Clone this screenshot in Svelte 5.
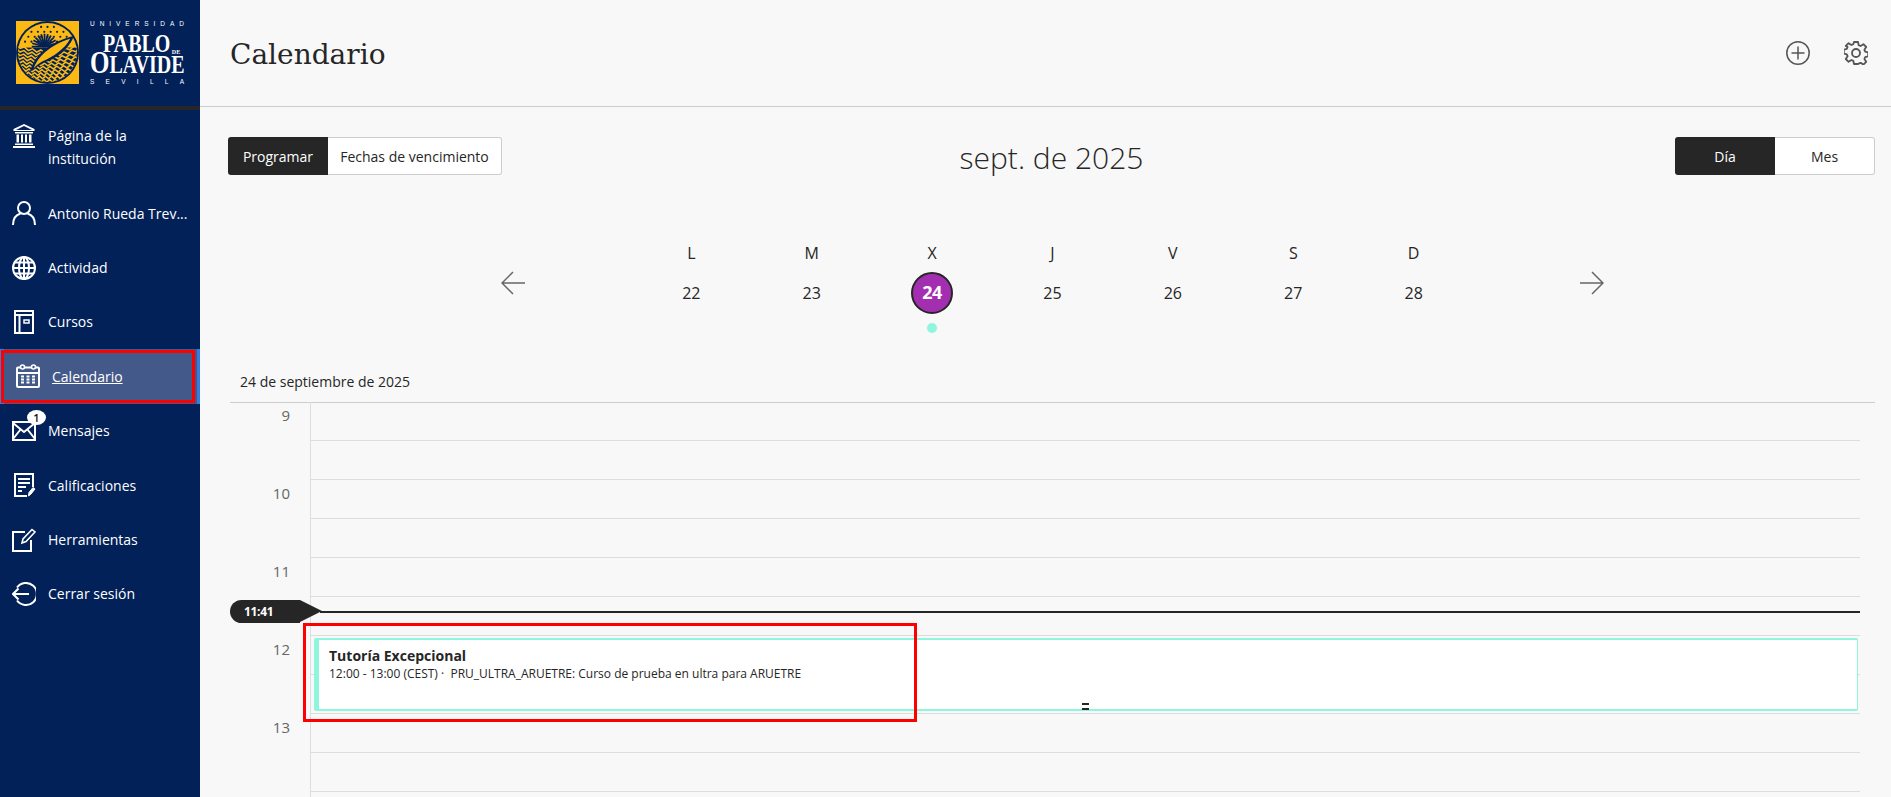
<script lang="ts">
const days = [
  { letter: 'L', num: 22 },
  { letter: 'M', num: 23 },
  { letter: 'X', num: 24, today: true },
  { letter: 'J', num: 25 },
  { letter: 'V', num: 26 },
  { letter: 'S', num: 27 },
  { letter: 'D', num: 28 }
];
// the last row only shows its grid lines, its label is below the fold
const hours = ['9', '10', '11', '12', '13', ''];

// zigzag stripes of the logo's lower half
function zigzags() {
  const out: string[] = [];
  for (let r = 0; r < 10; r++) {
    const y = 31 + r * 3.3;
    let d = `M0 ${y}`;
    const step = 4.2 - r * 0.15;
    for (let x = 0, i = 0; x < 66; x += step, i++) {
      const bend = ((x - 32) / 32) ** 2 * -6 * (1 - r / 10);
      d += ` L${x.toFixed(1)} ${(y + bend + (i % 2 ? 1.3 : -1.3)).toFixed(1)}`;
    }
    out.push(d);
  }
  return out;
}
const dots: number[][] = [];
for (let row = 0; row < 4; row++) {
  for (let col = 0; col < 9; col++) {
    const x = 6 + col * 6.5 + (row % 2 ? 3.2 : 0);
    const y = 6 + row * 5;
    if ((x - 32) ** 2 + (y - 32) ** 2 < 27 * 27) dots.push([x, y]);
  }
}
const rays: string[] = [];
for (let a = 180; a <= 360; a += 15) {
  const rad = (a * Math.PI) / 180;
  rays.push(`M29 26 L${(29 + 13 * Math.cos(rad)).toFixed(1)} ${(26 + 13 * Math.sin(rad)).toFixed(1)}`);
}
</script>

<div class="page">
  <aside class="sidebar">
    <div class="brand">
      <svg class="crest" width="63" height="63" viewBox="0 0 64 64">
        <defs><clipPath id="disc"><circle cx="32" cy="32" r="30" /></clipPath></defs>
        <rect width="64" height="64" fill="#fdb913" />
        <circle cx="32" cy="32" r="32" fill="#012158" />
        <g clip-path="url(#disc)">
          <rect width="64" height="64" fill="#fdb913" />
          {#each dots as d}<circle cx={d[0]} cy={d[1]} r="1.1" fill="#012158" />{/each}
          {#each rays as r}<path d={r} stroke="#012158" stroke-width="1.800" />{/each}
          <rect y="27" width="64" height="37" fill="#012158" />
          {#each zigzags() as z}<path d={z} fill="none" stroke="#fdb913" stroke-width="1.600" />{/each}
        </g>
        <path d="M14 52C18 37 31 22 59 15 53 30 41 38 27 43 22 46 17 50 14 52z" fill="#012158" />
        <path d="M18 48C22 37 33 25 55 18 49 29 38 36 27 41 23 43 20 46 18 48z" fill="#fdb913" />
      </svg>
      <svg class="wordmark" width="100" height="68" viewBox="0 0 100 68">
        <text class="uni" x="0" y="5" textLength="94">UNIVERSIDAD</text>
        <text class="big" transform="translate(13 31) scale(1 1.300)">PABLO</text>
        <text class="de" x="86" y="33" text-anchor="middle">DE</text>
        <text class="big" transform="translate(0 52) scale(1 1.300)"><tspan class="cap">O</tspan>LAVIDE</text>
        <text class="uni" x="0" y="63" textLength="94">SEVILLA</text>
      </svg>
    </div>

    <nav>
      <a class="item tall" href="#inst">
        <svg viewBox="0 0 24 24" fill="currentColor"><path d="M12 0 1.500 5v2h21V5zM4 6l8-4 8 4z" fill-rule="evenodd" /><path d="M3 8h18v1.500H3zM4.500 10.500h2.500v8H4.500zM9 10.500h2v8H9zM13 10.500h2v8h-2zM17 10.500h2.500v8H17zM3 19.500h18V21H3zM1 22h22v2H1z" /></svg>
        <span class="lbl">Página de la<br />institución</span>
      </a>
      <a class="item" href="#user">
        <svg viewBox="0 0 24 24" fill="none" stroke="currentColor" stroke-width="2"><circle cx="12" cy="7" r="6" /><path d="M1 24c0-7 4-10.500 7.500-11.500M23 24c0-7-4-10.500-7.500-11.500" /></svg>
        <span class="lbl">Antonio Rueda Trev...</span>
      </a>
      <a class="item" href="#act">
        <svg viewBox="0 0 24 24" fill="none" stroke="currentColor" stroke-width="2"><circle cx="12" cy="12" r="11" /><ellipse cx="12" cy="12" rx="5" ry="11" /><path d="M12 1v22M1 12h22M2.500 6.500h19M2.500 17.500h19" /></svg>
        <span class="lbl">Actividad</span>
      </a>
      <a class="item" href="#cursos">
        <svg viewBox="0 0 24 24" fill="none" stroke="currentColor" stroke-width="2"><path d="M3 1h18v22H3zM3 5h18M7.500 5v18" /><rect x="12" y="10" width="5" height="3" stroke-width="1.500" /></svg>
        <span class="lbl">Cursos</span>
      </a>
      <a class="item current" href="#cal">
        <svg viewBox="0 0 24 24" fill="none" stroke="currentColor" stroke-width="2"><rect x="1" y="3.500" width="22" height="19.500" rx="1" /><path d="M1 9h22" /><circle cx="6.500" cy="3" r="2" fill="#43598a" stroke-width="1.600" /><circle cx="17.500" cy="3" r="2" fill="#43598a" stroke-width="1.600" /><path d="M5 12.500h3M10.500 12.500h3M16 12.500h3M5 15.500h3M10.500 15.500h3M16 15.500h3M5 18.500h3M10.500 18.500h3M16 18.500h3" /></svg>
        <span class="lbl">Calendario</span>
      </a>
      <a class="item" href="#msg">
        <span class="msgicon">
          <svg viewBox="0 0 24 24" fill="none" stroke="currentColor" stroke-width="2"><path d="M1 3h22v18H1zM1 4l11 9 11-9M1 20l7.500-9.500M23 20l-7.500-9.500" /></svg>
          <span class="badge">1</span>
        </span>
        <span class="lbl">Mensajes</span>
      </a>
      <a class="item" href="#cal2">
        <svg viewBox="0 0 24 24" fill="none" stroke="currentColor" stroke-width="2"><path d="M15 23H3V1h18v13" /><path d="M6 6h12M6 10h12M6 14h8M6 18h4" /><path d="M16.500 23l.5-3.500 4-5 2 1.500-4 5z" fill="currentColor" stroke-width="1" /></svg>
        <span class="lbl">Calificaciones</span>
      </a>
      <a class="item" href="#tools">
        <svg viewBox="0 0 24 24" fill="none" stroke="currentColor" stroke-width="2"><path d="M13 4H1v19h18V12" /><path d="M10 15l1-4 9-9.500 3 2.500-9 9.500z" stroke-width="1.600" /></svg>
        <span class="lbl">Herramientas</span>
      </a>
      <a class="item" href="#exit">
        <svg viewBox="0 0 24 24" fill="none" stroke="currentColor" stroke-width="2"><path d="M5 5.500A11 11 0 1 1 5 18.500" /><path d="M17 12H1M6.500 6.500 1 12l5.500 5.500" /></svg>
        <span class="lbl">Cerrar sesión</span>
      </a>
    </nav>
  </aside>

  <main>
    <header class="top">
      <h1>Calendario</h1>
      <div class="top-actions">
        <svg viewBox="0 0 24 24" fill="none" stroke="#555" stroke-width="1.500"><circle cx="12" cy="12" r="11.200" /><path d="M12 5.500v13M5.500 12h13" /></svg>
        <svg viewBox="0 0 24 24" fill="none" stroke="#555" stroke-width="1.800" stroke-linejoin="round"><circle cx="12" cy="12" r="4" /><path d="M10 1h4l.7 3.200 1.900.8 2.800-1.800 2.800 2.800-1.800 2.800.8 1.900 3 .7v4l-3 .7-.8 1.900 1.800 2.800-2.800 2.800-2.800-1.800-1.900.8L14 23h-4l-.7-3.200-1.900-.8-2.800 1.800-2.800-2.800 1.800-2.800-.8-1.900-3-.7v-4l3-.7.8-1.900L1.800 5 4.600 2.200l2.800 1.800 1.900-.8z" /></svg>
      </div>
    </header>

    <section class="toolbar">
      <div class="seg">
        <button class="on prog">Programar</button>
        <button class="venc">Fechas de vencimiento</button>
      </div>
      <h2>sept. de 2025</h2>
      <div class="seg right">
        <button class="on wide">Día</button>
        <button class="wide">Mes</button>
      </div>
    </section>

    <section class="week">
      <svg class="arrow" viewBox="0 0 24 24" fill="none" stroke="#666" stroke-width="1.500"><path d="M24 12H1M12 1 1 12l11 11" /></svg>
      <div class="days">
        {#each days as d}
          <div class="day">
            <span class="letter">{d.letter}</span>
            <span class="num" class:today={d.today}>{d.num}</span>
            {#if d.today}<span class="dot"></span>{/if}
          </div>
        {/each}
      </div>
      <svg class="arrow" viewBox="0 0 24 24" fill="none" stroke="#666" stroke-width="1.500"><path d="M0 12h23M12 1l11 11-11 11" /></svg>
    </section>

    <div class="datelabel">24 de septiembre de 2025</div>

    <section class="grid">
      {#each hours as h}
        <div class="hour">
          <span class="hlabel">{h}</span>
          <div class="slots"><div class="slot"></div><div class="slot"></div></div>
        </div>
      {/each}

      <div class="now"><span class="pill">11:41</span><span class="nowline"></span></div>

      <div class="event">
        <strong>Tutoría Excepcional</strong>
        <span>12:00 - 13:00 (CEST) ·&nbsp; PRU_ULTRA_ARUETRE: Curso de prueba en ultra para ARUETRE</span>
        <i class="handle"></i>
      </div>
      <div class="redbox"></div>
    </section>
  </main>
</div>

<style>
  :global(body) {
    margin: 0;
    overflow: hidden;
    background: #f8f8f8;
  }
  .page {
    display: flex;
    height: 797px;
    overflow: hidden;
    font-family: 'Open Sans', sans-serif;
    font-size: 14px;
    color: #262626;
  }

  .sidebar {
    width: 200px;
    flex: none;
    background: #012158;
    color: #fff;
  }
  .brand {
    height: 110px;
    box-sizing: border-box;
    border-bottom: 4px solid #262626;
    display: flex;
    align-items: flex-start;
    padding: 21px 0 0 16px;
    gap: 11px;
  }
  .wordmark {
    fill: #fff;
    overflow: visible;
  }
  .uni {
    font-family: 'Liberation Sans', sans-serif;
    font-size: 6.500px;
  }
  .big {
    font-family: 'Liberation Serif', serif;
    font-size: 20px;
    font-weight: 700;
  }
  .cap {
    font-size: 25px;
  }
  .de {
    font-family: 'Liberation Serif', serif;
    font-size: 6px;
    font-weight: 700;
  }

  nav {
    display: flex;
    flex-direction: column;
  }
  .item {
    display: flex;
    align-items: center;
    gap: 12px;
    height: 54.4px;
    padding-left: 12px;
    box-sizing: border-box;
    color: #fff;
    text-decoration: none;
    position: relative;
  }
  .item > svg,
  .msgicon svg {
    width: 24px;
    height: 24px;
    flex: none;
    display: block;
  }
  .item.tall {
    height: 76px;
    align-items: flex-start;
    padding-top: 14px;
  }
  .lbl {
    line-height: 23px;
  }
  .current {
    background: #43598a;
    border-left: 4px solid #2f7ee0;
    border-right: 3px solid #2f7ee0;
  }
  .current::after {
    content: '';
    position: absolute;
    left: -3px;
    right: 2px;
    top: 1px;
    bottom: 1px;
    border: 3px solid #f00;
  }
  .current .lbl {
    text-decoration: underline;
  }
  .msgicon {
    position: relative;
    flex: none;
  }
  .badge {
    position: absolute;
    left: 15px;
    top: -9px;
    width: 19px;
    height: 15px;
    border-radius: 50%;
    background: #fff;
    color: #111;
    font-size: 11px;
    font-weight: 600;
    line-height: 15px;
    text-align: center;
  }

  main {
    flex: 1;
    min-width: 0;
  }
  .top {
    height: 107px;
    box-sizing: border-box;
    border-bottom: 1px solid #cdcdcd;
    display: flex;
    align-items: center;
    justify-content: space-between;
    padding: 0 23px 0 30px;
  }
  h1 {
    margin: 2px 0 0;
    font-family: 'DejaVu Serif', serif;
    font-size: 28px;
    font-weight: 400;
  }
  .top-actions {
    display: flex;
    gap: 34px;
  }
  .top-actions svg {
    width: 24px;
    height: 24px;
  }

  .toolbar {
    display: grid;
    grid-template-columns: 1fr auto 1fr;
    align-items: center;
    padding: 30px 16px 0 28px;
  }
  h2 {
    margin: 2px 0 -2px;
    font-size: 30px;
    font-weight: 300;
    line-height: 38px;
  }
  .seg {
    display: flex;
    height: 38px;
  }
  .seg.right {
    justify-content: flex-end;
  }
  .seg button {
    font: inherit;
    font-size: 14px;
    color: #262626;
    background: #fff;
    border: 1px solid #cdcdcd;
    border-left: 0;
    border-radius: 0 3px 3px 0;
    padding: 0;
  }
  .seg button.on {
    background: #262626;
    color: #fff;
    border: 0;
    border-radius: 3px 0 0 3px;
  }
  .prog {
    width: 100px;
  }
  .venc {
    width: 174px;
  }
  .wide {
    width: 100px;
  }

  .week {
    display: flex;
    justify-content: center;
    align-items: flex-start;
    gap: 106px;
    margin-top: 65px;
    padding-left: 14px;
  }
  .arrow {
    width: 24px;
    height: 24px;
    margin-top: 31px;
    flex: none;
  }
  .days {
    display: grid;
    grid-template-columns: repeat(7, 120.4px);
    height: 100px;
  }
  .day {
    display: flex;
    flex-direction: column;
    align-items: center;
  }
  .letter {
    font-size: 16px;
    line-height: 26px;
  }
  .num {
    width: 42px;
    height: 42px;
    box-sizing: border-box;
    margin-top: 6px;
    border-radius: 50%;
    font-size: 16px;
    line-height: 42px;
    text-align: center;
  }
  .num.today {
    background: #a42eb0;
    border: 2px solid #262626;
    color: #fff;
    font-weight: 700;
    font-size: 18px;
    line-height: 37px;
    letter-spacing: -0.5px;
  }
  .dot {
    width: 10px;
    height: 10px;
    border-radius: 50%;
    background: #8ff5dc;
    margin-top: 9px;
  }

  .datelabel {
    margin: 23px 0 0 40px;
    height: 39px;
    font-size: 14px;
    line-height: 38px;
  }

  .grid {
    position: relative;
    margin: 0 16px 0 30px;
    border-top: 1px solid #cdcdcd;
  }
  .hour {
    display: flex;
  }
  .hour:first-child {
    margin-top: -1px;
  }
  .hlabel {
    width: 60px;
    padding-top: 3px;
    flex: none;
    text-align: right;
    font-size: 15px;
    line-height: 20px;
    color: #666;
  }
  .slots {
    flex: 1;
    margin: 0 15px 0 20px;
    border-left: 1px solid #ddd;
  }
  .slot {
    height: 39px;
    box-sizing: border-box;
    border-bottom: 1px solid #ddd;
  }

  .now {
    position: absolute;
    left: 0;
    right: 15px;
    top: 197px;
    height: 23px;
    display: flex;
    align-items: center;
  }
  .pill {
    position: relative;
    width: 70px;
    height: 23px;
    box-sizing: border-box;
    padding-left: 14px;
    background: #262626;
    border-radius: 11.5px 0 0 11.5px;
    color: #fff;
    font-size: 12px;
    font-weight: 700;
    line-height: 23px;
    letter-spacing: -0.3px;
  }
  .pill::after {
    content: '';
    position: absolute;
    left: 70px;
    top: 0;
    border-left: 22px solid #262626;
    border-top: 11.5px solid transparent;
    border-bottom: 11.5px solid transparent;
  }
  .nowline {
    flex: 1;
    margin-left: 20px;
    height: 2px;
    background: #262626;
  }

  .event {
    position: absolute;
    left: 84px;
    right: 17px;
    top: 235px;
    height: 73px;
    box-sizing: border-box;
    background: #fff;
    border: 2px solid #8ff5dc;
    border-left-width: 5px;
    border-right-width: 1px;
    border-radius: 2px;
    padding: 5px 0 0 10px;
    display: flex;
    flex-direction: column;
    font-size: 12px;
  }
  .event strong {
    font-size: 14px;
    line-height: 21px;
  }
  .event span {
    line-height: 16px;
  }
  .handle {
    position: absolute;
    left: 763px;
    top: 63px;
    width: 7px;
    height: 2px;
    background: #262626;
    box-shadow: 0 5px 0 #262626;
  }
  .redbox {
    position: absolute;
    left: 73px;
    top: 220px;
    width: 614px;
    height: 99px;
    box-sizing: border-box;
    border: 3px solid #f00;
  }
</style>
